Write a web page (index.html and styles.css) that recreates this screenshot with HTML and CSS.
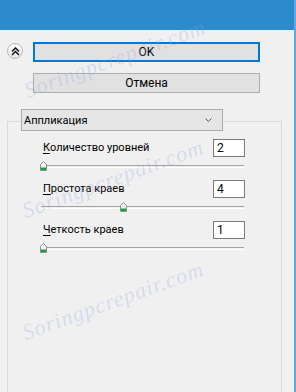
FILE: index.html
```html
<!DOCTYPE html>
<html lang="ru">
<head>
<meta charset="utf-8">
<title>Аппликация</title>
<link rel="stylesheet" href="styles.css">
</head>
<body>
<div class="window">
  <div class="titlebar"></div>
  <div class="content">
    <div class="actions">
      <button class="collapse" aria-label="Свернуть">
        <svg width="9" height="9" viewBox="0 0 9 9"><path d="M1 4.5 L4.5 1 L8 4.5 M1 8 L4.5 4.5 L8 8" fill="none" stroke="#111" stroke-width="1.5"/></svg>
      </button>
      <button class="btn btn-primary">OK</button>
      <span></span>
      <button class="btn">Отмена</button>
    </div>
    <div class="group">
      <div class="select">
        <span>Аппликация</span>
        <svg width="7" height="4" viewBox="0 0 7 4"><path d="M0.5 0.5 L3.5 3.5 L6.5 0.5" fill="none" stroke="#555" stroke-width="1"/></svg>
      </div>
      <div class="fields">
        <div class="field">
          <label><u>К</u>оличество уровней</label>
          <input class="num" type="text" value="2" readonly>
          <div class="slider">
            <div class="track"></div>
            <svg class="thumb" style="left:0px" viewBox="0 0 7 10"><path d="M0.5 9.5 V3.5 L3.5 0.5 L6.5 3.5 V9.5 Z" fill="#f4f4f4" stroke="#8c8c8c"/><rect x="1" y="6.5" width="5" height="2.5" fill="#1aa33a"/></svg>
          </div>
        </div>
        <div class="field">
          <label><u>П</u>ростота краев</label>
          <input class="num" type="text" value="4" readonly>
          <div class="slider">
            <div class="track"></div>
            <svg class="thumb" style="left:80px" viewBox="0 0 7 10"><path d="M0.5 9.5 V3.5 L3.5 0.5 L6.5 3.5 V9.5 Z" fill="#f4f4f4" stroke="#8c8c8c"/><rect x="1" y="6.5" width="5" height="2.5" fill="#1aa33a"/></svg>
          </div>
        </div>
        <div class="field">
          <label><u>Ч</u>еткость краев</label>
          <input class="num" type="text" value="1" readonly>
          <div class="slider">
            <div class="track"></div>
            <svg class="thumb" style="left:0px" viewBox="0 0 7 10"><path d="M0.5 9.5 V3.5 L3.5 0.5 L6.5 3.5 V9.5 Z" fill="#f4f4f4" stroke="#8c8c8c"/><rect x="1" y="6.5" width="5" height="2.5" fill="#1aa33a"/></svg>
          </div>
        </div>
      </div>
    </div>
  </div>
  <div class="watermark wm1">Soringpcrepair.com</div>
  <div class="watermark wm2">Soringpcrepair.com</div>
  <div class="watermark wm3">Soringpcrepair.com</div>
</div>
</body>
</html>
```
FILE: styles.css
```css
* { box-sizing: border-box; }
html, body { margin: 0; padding: 0; }
body {
  width: 296px;
  height: 392px;
  overflow: hidden;
  background: #f0f0f0;
  font-family: Roboto, "Noto Sans", sans-serif;
  font-size: 11px;
  color: #000;
}
.window {
  position: relative;
  height: 392px;
  display: flex;
  flex-direction: column;
  border-right: 2px solid #62a7e2;
  overflow: hidden;
}
.titlebar {
  flex: none;
  height: 30px;
  background: #2b8bcb;
}
.content {
  flex: 1;
  display: flex;
  flex-direction: column;
  background: #f0f0f0;
}
.actions {
  display: grid;
  grid-template-columns: 16px 227px;
  grid-auto-rows: 20px;
  column-gap: 10px;
  row-gap: 11px;
  padding: 12px 0 0 7px;
}
.collapse {
  width: 16px;
  height: 16px;
  margin-top: 1px;
  padding: 0;
  border: 1px solid #b9b9b9;
  border-radius: 50%;
  background: linear-gradient(#ffffff, #e6e6e6);
  display: flex;
  align-items: center;
  justify-content: center;
}
.btn {
  height: 20px;
  padding: 0;
  border: 1px solid #adadad;
  background: #e1e1e1;
  font: inherit;
  font-size: 12px;
  color: #000;
}
.btn-primary {
  border: 2px solid #0078d7;
}
.group {
  flex: 1;
  margin: 28px 0 0 7px;
  width: 275px;
  border: 1px solid #dadada;
  border-bottom: 0;
}
.select {
  margin: -13px 0 0 13px;
  width: 202px;
  height: 22px;
  padding: 0 10px 0 2px;
  border: 1px solid #acacac;
  background: #e5e5e5;
  display: flex;
  align-items: center;
  justify-content: space-between;
}
.fields {
  margin: 8px 0 0 35px;
  width: 201px;
  display: flex;
  flex-direction: column;
  gap: 6px;
}
.field {
  display: grid;
  grid-template-columns: 1fr 32px;
  grid-template-rows: 18px 12px;
  row-gap: 3px;
  height: 35px;
}
.field label {
  align-self: center;
  line-height: 16px;
}
.field u {
  text-decoration-thickness: 1px;
  text-underline-offset: 2px;
}
.num {
  width: 32px;
  height: 18px;
  padding: 0 3px;
  border: 1px solid #7a7a7a;
  background: #fff;
  font: inherit;
  font-size: 12px;
  color: #000;
  outline: none;
}
.slider {
  grid-column: 1 / -1;
  position: relative;
  margin-left: -3px;
  width: 205px;
  height: 12px;
}
.track {
  position: absolute;
  left: 1px;
  right: 1px;
  top: 5px;
  height: 3px;
  border-top: 1px solid #a3a3a3;
  border-bottom: 1px solid #ffffff;
}
.thumb {
  position: absolute;
  top: 1px;
  width: 7px;
  height: 10px;
}
.watermark {
  position: absolute;
  width: 210px;
  text-align: center;
  font-family: "Liberation Serif", serif;
  font-style: italic;
  font-size: 22px;
  letter-spacing: 1px;
  color: rgba(150, 168, 225, 0.3);
  transform: rotate(-20deg);
  white-space: nowrap;
  pointer-events: none;
}
.wm1 { left: 10px; top: 46px; }
.wm2 { left: 8px; top: 166px; }
.wm3 { left: 8px; top: 288px; }
```
